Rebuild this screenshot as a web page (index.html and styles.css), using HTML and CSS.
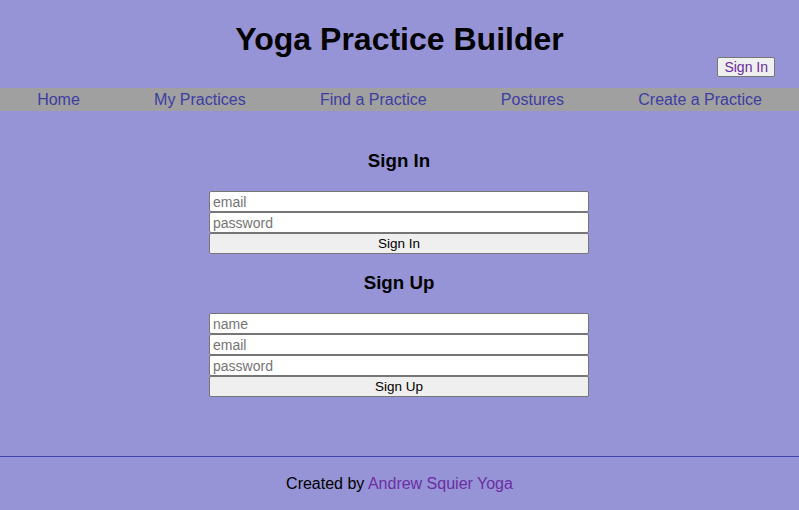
FILE: index.html
```html
<!DOCTYPE html>
<html>
<head>
<meta charset="utf-8">
<link rel="stylesheet" href="styles.css">
</head>
<body>
<header class="header">
  <h1 class="title">Yoga Practice Builder</h1>
  <div class="account">
    <button class="account-btn">Sign In</button>
  </div>
</header>
<nav class="nav">
  <a class="nav-link" href="#">Home</a>
  <a class="nav-link" href="#">My Practices</a>
  <a class="nav-link" href="#">Find a Practice</a>
  <a class="nav-link" href="#">Postures</a>
  <a class="nav-link" href="#">Create a Practice</a>
</nav>
<main class="main">
  <section class="auth">
    <h3 class="auth-title">Sign In</h3>
    <form class="form">
      <input class="field" type="text" placeholder="email">
      <input class="field" type="password" placeholder="password">
      <button class="submit" type="button">Sign In</button>
    </form>
  </section>
  <section class="auth">
    <h3 class="auth-title">Sign Up</h3>
    <form class="form">
      <input class="field" type="text" placeholder="name">
      <input class="field" type="text" placeholder="email">
      <input class="field" type="password" placeholder="password">
      <button class="submit" type="button">Sign Up</button>
    </form>
  </section>
</main>
<footer class="footer">
  <p class="credit">Created by <a class="credit-link" href="#">Andrew Squier Yoga</a></p>
</footer>
</body>
</html>
```
FILE: styles.css
```css
html, body {
  margin: 0;
  padding: 0;
}
body {
  background: #9694d6;
  font-family: "Liberation Sans", Arial, sans-serif;
  color: #000;
  height: 510px;
  overflow: hidden;
}
.header {
  display: flex;
  flex-direction: column;
}
.title {
  margin: 21px 0 0;
  font-size: 32px;
  line-height: 36px;
  text-align: center;
  font-weight: bold;
}
.account {
  display: flex;
  justify-content: flex-end;
  padding-right: 24px;
}
.account-btn {
  height: 20px;
  padding: 0 6px;
  font-family: "Liberation Sans", Arial, sans-serif;
  font-size: 14px;
  color: #6a2aa0;
  background: #efefef;
  border: 1px solid #767676;
  border-radius: 2px;
}
.nav {
  margin-top: 11px;
  height: 23px;
  background: #a0a0a0;
  display: flex;
  justify-content: space-around;
  align-items: center;
}
.nav-link {
  color: #3d3da3;
  text-decoration: none;
  font-size: 16px;
}
.main {
  padding-top: 21px;
  display: flex;
  flex-direction: column;
  align-items: center;
}
.auth {
  width: 380px;
  display: flex;
  flex-direction: column;
  align-items: center;
  margin-right: 1px;
}
.auth-title {
  margin: 18px 0 19px;
  font-size: 18.7px;
  line-height: 22px;
  font-weight: bold;
}
.form {
  width: 380px;
  display: flex;
  flex-direction: column;
}
.field {
  box-sizing: border-box;
  height: 21px;
  margin: 0;
  padding: 0 3px;
  border: 1px solid #767676;
  border-radius: 2px;
  background: #fff;
  font-family: "Liberation Sans", Arial, sans-serif;
  font-size: 14px;
}
.field::placeholder {
  color: #757575;
}
.submit {
  box-sizing: border-box;
  height: 21px;
  margin: 0;
  padding: 0;
  border: 1px solid #767676;
  border-radius: 2px;
  background: #efefef;
  font-family: "Liberation Sans", Arial, sans-serif;
  font-size: 13.5px;
  color: #000;
}
.footer {
  margin-top: 59px;
  border-top: 1px solid #4444b0;
}
.credit {
  margin: 18px 0 0;
  text-align: center;
  font-size: 16px;
  line-height: 18px;
}
.credit-link {
  color: #6c2ea3;
  text-decoration: none;
}
```
